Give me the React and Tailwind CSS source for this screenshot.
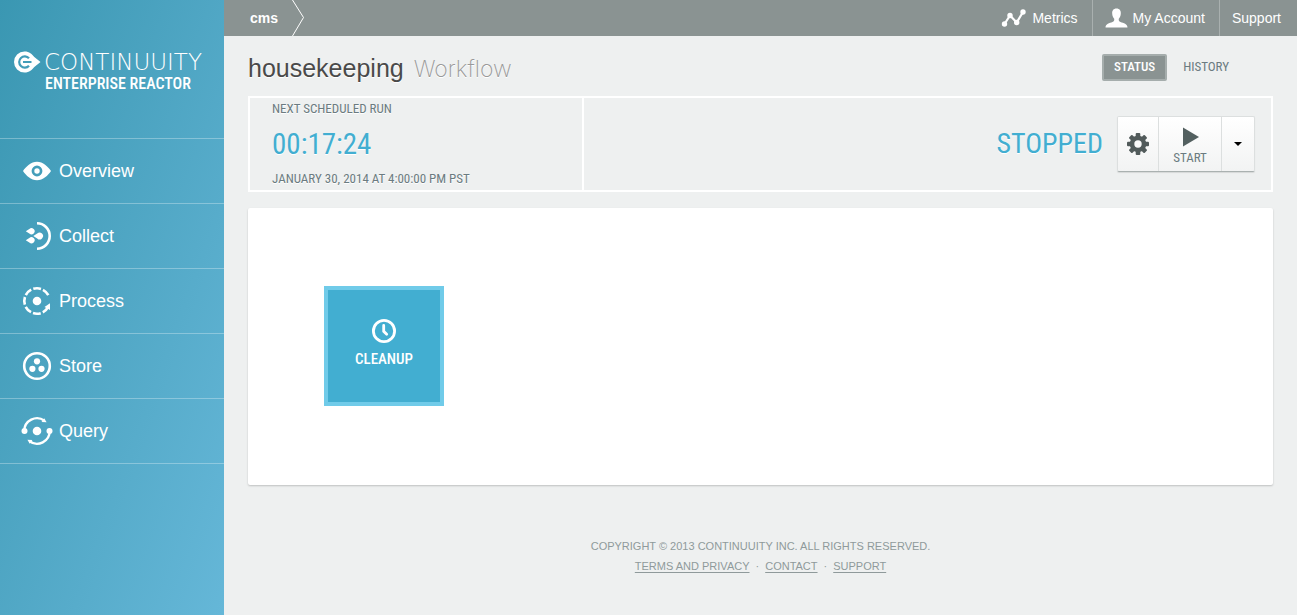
import React from "react";

const narrow = "font-['Roboto_Condensed','Liberation_Sans_Narrow','Liberation_Sans',sans-serif]";

function EyeIcon() {
  return (
    <svg viewBox="0 0 32 32" className="size-8 shrink-0" fill="#fff" aria-hidden="true">
      <path
        fillRule="evenodd"
        d="M2 16C5 11.500 10 6.700 16 6.700S27 11.500 30 16C27 20.500 22 25.300 16 25.300S5 20.500 2 16ZM16 10.600a5.400 5.400 0 1 0 0 10.800a5.400 5.400 0 1 0 0-10.800Z"
      />
      <circle cx="16" cy="16" r="2.700" />
    </svg>
  );
}

function CollectIcon() {
  return (
    <svg viewBox="0 0 32 32" className="size-8 shrink-0" fill="#fff" aria-hidden="true">
      <path d="M16 3.300a12.700 12.700 0 0 1 0 25.400" fill="none" stroke="#fff" strokeWidth="2.600" />
      <path d="M4.800 11.200L8.300 9A3.100 3.100 0 1 1 8.300 13.400Z" />
      <path d="M4.800 20.300L8.300 18.100A3.100 3.100 0 1 1 8.300 22.500Z" />
      <path d="M12.300 16L16.200 13.600A3.400 3.400 0 1 1 16.200 18.400Z" />
    </svg>
  );
}

function ProcessIcon() {
  return (
    <svg viewBox="0 0 32 32" className="size-8 shrink-0" fill="#fff" aria-hidden="true">
      <circle
        cx="16"
        cy="16"
        r="12.700"
        pathLength="360"
        fill="none"
        stroke="#fff"
        strokeWidth="2.600"
        strokeDasharray="35 10 35 10 35 10 35 10 35 10 35 10 35 55"
        transform="rotate(28 16 16)"
      />
      <circle cx="16" cy="16" r="4.300" />
      <path d="M29 18.300V25L23.500 22Z" />
    </svg>
  );
}

function StoreIcon() {
  return (
    <svg viewBox="0 0 32 32" className="size-8 shrink-0" fill="#fff" aria-hidden="true">
      <circle cx="16" cy="16" r="12.800" fill="none" stroke="#fff" strokeWidth="2.600" />
      <circle cx="16" cy="11.300" r="3.100" />
      <circle cx="11.400" cy="18.800" r="3.100" />
      <circle cx="20.500" cy="18.800" r="3.100" />
    </svg>
  );
}

function QueryIcon() {
  return (
    <svg viewBox="0 0 32 32" className="size-8 shrink-0" fill="#fff" aria-hidden="true">
      <path
        d="M3.300 16A12.700 12.700 0 0 1 23.500 5.700M28.700 16A12.700 12.700 0 0 1 8.500 26.300"
        fill="none"
        stroke="#fff"
        strokeWidth="2.300"
      />
      <path d="M25.600 7.200L20.600 7L23.200 3.200Z" />
      <path d="M6.400 24.800L11.400 25L8.800 28.800Z" />
      <circle cx="16" cy="16" r="4.300" />
      <circle cx="3.500" cy="16" r="3" />
      <circle cx="28.500" cy="16" r="3" />
    </svg>
  );
}

const navItems = [
  { label: "Overview", Icon: EyeIcon },
  { label: "Collect", Icon: CollectIcon },
  { label: "Process", Icon: ProcessIcon },
  { label: "Store", Icon: StoreIcon },
  { label: "Query", Icon: QueryIcon },
];

function Sidebar() {
  return (
    <aside className="w-56 shrink-0 bg-linear-to-br from-[#3a97b2] to-[#65b7d8] text-white">
      <div className="h-[138px] pt-[51px] pl-3.5">
        <div className="flex items-center gap-[3px]">
          <svg viewBox="0 0 27 22" className="h-[22px] w-[27px] shrink-0" aria-hidden="true">
            <path d="M10.500 .500C15.500 .500 18 3.200 20.300 6L26.500 11L20.300 16C18 18.800 15.500 21.500 10.500 21.500A10.500 10.500 0 0 1 10.500 .500Z" fill="#fff" />
            <path d="M15 7.300A5.600 5.600 0 1 0 15 14.700M9 11H17.500" fill="none" stroke="#429db9" strokeWidth="2.200" />
          </svg>
          <span className="font-['DejaVu_Sans',sans-serif] text-[23px] leading-[22px] font-extralight">CONTINUUITY</span>
        </div>
        <div className={`${narrow} pl-[31px] text-[16px] leading-[22px] font-medium`}>ENTERPRISE REACTOR</div>
      </div>
      <nav className="border-b border-white/30">
        {navItems.map(({ label, Icon }) => (
          <a key={label} href="#" className="flex h-[65px] items-center gap-1.5 border-t border-white/30 pl-[21px] text-[18px]">
            <Icon />
            {label}
          </a>
        ))}
      </nav>
    </aside>
  );
}

function TopBar() {
  return (
    <header className="flex h-9 items-stretch bg-[#8a9392] text-[14px] text-white">
      <a href="#" className="flex items-center pl-[26px] font-bold">
        cms
      </a>
      <svg viewBox="0 0 14 36" className="ml-3.5 h-9 w-3.5" fill="none" stroke="#fff" aria-hidden="true">
        <path d="M.500 0L11.500 17.500L.500 36" />
      </svg>
      <nav className="ml-auto flex items-stretch">
        <a href="#" className="flex items-center gap-[5px] pr-3.5 pl-3">
          <svg viewBox="0 0 26 20" className="h-5 w-[26px]" fill="#fff" aria-hidden="true">
            <path d="M3.500 16L9 7.500L15.700 14.500L22 4" fill="none" stroke="#fff" strokeWidth="2.200" />
            <circle cx="3.500" cy="16" r="2.700" />
            <circle cx="9" cy="7.500" r="2.700" />
            <circle cx="15.700" cy="14.500" r="2.700" />
            <circle cx="22" cy="4" r="2.700" />
          </svg>
          Metrics
        </a>
        <a href="#" className="flex items-center gap-[5px] border-l border-[#a9b0af] pr-3.5 pl-3">
          <svg viewBox="0 0 23 20" className="h-5 w-[23px]" fill="#fff" aria-hidden="true">
            <path d="M11.500 .500C14.600 .500 16 2.700 15.800 5.500C15.700 8 14.900 9.500 13.800 10.800C13.500 12.500 14 13.300 15.500 14C18.500 15.200 22.500 15.800 22.500 19.500H.500C.500 15.800 4.500 15.200 7.500 14C9 13.300 9.500 12.500 9.200 10.800C8.100 9.500 7.300 8 7.200 5.500C7 2.700 8.400 .500 11.500 .500Z" />
          </svg>
          My Account
        </a>
        <a href="#" className="flex items-center border-l border-[#a9b0af] pr-4 pl-3">
          Support
        </a>
      </nav>
    </header>
  );
}

function GearIcon() {
  return (
    <svg viewBox="0 0 24 24" className="size-6" fill="#525b5b" aria-hidden="true">
      {[0, 45, 90, 135].map((angle) => (
        <rect key={angle} x="9.700" y="1" width="4.600" height="22" rx="1" transform={`rotate(${angle} 12 12)`} />
      ))}
      <circle cx="12" cy="12" r="8.300" />
      <circle cx="12" cy="12" r="3.700" fill="#fafafa" />
    </svg>
  );
}

function StatusPanel() {
  return (
    <section className={`${narrow} flex h-24 border-2 border-white text-[13px] text-[#6b7b80]`}>
      <div className="flex w-[334px] shrink-0 flex-col justify-between border-r-2 border-white px-[22px] text-shadow-[0_1px_0_#fff]">
        <h2 className="leading-[22px]">NEXT SCHEDULED RUN</h2>
        <p className="text-[29px] leading-9 text-[#42aed1]">00:17:24</p>
        <p className="leading-[22px]">JANUARY 30, 2014 AT 4:00:00 PM PST</p>
      </div>
      <div className="flex grow items-center justify-end gap-3.5 pr-4">
        <span className="text-[28px] text-[#42aed1] text-shadow-[0_1px_0_#fff]">STOPPED</span>
        <div className="flex h-14 w-[138px] items-stretch rounded-xs border border-[#dcdfdf] border-b-[#aab1b0] bg-linear-to-b from-white to-[#f2f3f3] shadow-[0_1px_1px_rgba(0,0,0,0.1)]">
          <button aria-label="Settings" className="flex w-10 items-center justify-center">
            <GearIcon />
          </button>
          <button className="flex grow flex-col items-center justify-center border-x border-[#dcdfdf] pt-2">
            <svg viewBox="0 0 18 20" className="h-5 w-[18px]" aria-hidden="true">
              <path d="M2 .500L18 10L2 19.500Z" fill="#525f5f" />
            </svg>
            <span className="leading-[22px]">START</span>
          </button>
          <button aria-label="More actions" className="flex w-8 items-center justify-center">
            <svg viewBox="0 0 8 4" className="h-1 w-2" aria-hidden="true">
              <path d="M0 0H8L4 4Z" fill="#000" />
            </svg>
          </button>
        </div>
      </div>
    </section>
  );
}

export default function App() {
  return (
    <div className="flex min-h-screen bg-[#eef0f0] font-['Liberation_Sans',Arial,sans-serif]">
      <Sidebar />
      <div className="flex min-w-0 grow flex-col">
        <TopBar />
        <main className="px-6">
          <div className="flex h-[60px] items-center pt-0.5">
            <h1 className="flex items-baseline gap-2.5 pt-1 text-[25px] text-[#4a4a4a] text-shadow-[0_1px_0_#fff]">
              housekeeping
              <span className="font-['Inter','Roboto',sans-serif] text-[23px] font-extralight text-[#999]">Workflow</span>
            </h1>
            <div className={`${narrow} ml-auto flex items-center gap-4 pr-11 text-[13px]`}>
              <button className="h-[27px] w-[65px] rounded-xs border-2 border-[#a5adac] bg-[#8a9392] font-medium text-white">STATUS</button>
              <button className="text-[#6b7b80]">HISTORY</button>
            </div>
          </div>
          <StatusPanel />
          <section className="mt-4 h-[277px] rounded-xs bg-white px-[76px] pt-[78px] shadow-[0_1px_2px_rgba(0,0,0,0.2)]">
            <button className={`${narrow} flex size-[120px] flex-col items-center justify-center gap-1.5 border-4 border-[#70cbe9] bg-[#42aed1] pb-1 text-[15px] font-medium text-white`}>
              <svg viewBox="0 0 24 24" className="size-6" fill="none" stroke="#fff" aria-hidden="true">
                <circle cx="12" cy="12" r="10.600" strokeWidth="2.800" />
                <path d="M11.700 6.500V12.300L14.700 15.300" strokeWidth="2.800" strokeLinecap="round" />
              </svg>
              <span className="leading-5">CLEANUP</span>
            </button>
          </section>
        </main>
        <footer className="pt-[51px] text-center text-[11px] leading-5 text-[#8f9a9b]">
          <p>COPYRIGHT © 2013 CONTINUUITY INC. ALL RIGHTS RESERVED.</p>
          <p className="flex justify-center gap-1.5">
            <a href="#" className="underline underline-offset-2">TERMS AND PRIVACY</a>
            <span>·</span>
            <a href="#" className="underline underline-offset-2">CONTACT</a>
            <span>·</span>
            <a href="#" className="underline underline-offset-2">SUPPORT</a>
          </p>
        </footer>
      </div>
    </div>
  );
}
